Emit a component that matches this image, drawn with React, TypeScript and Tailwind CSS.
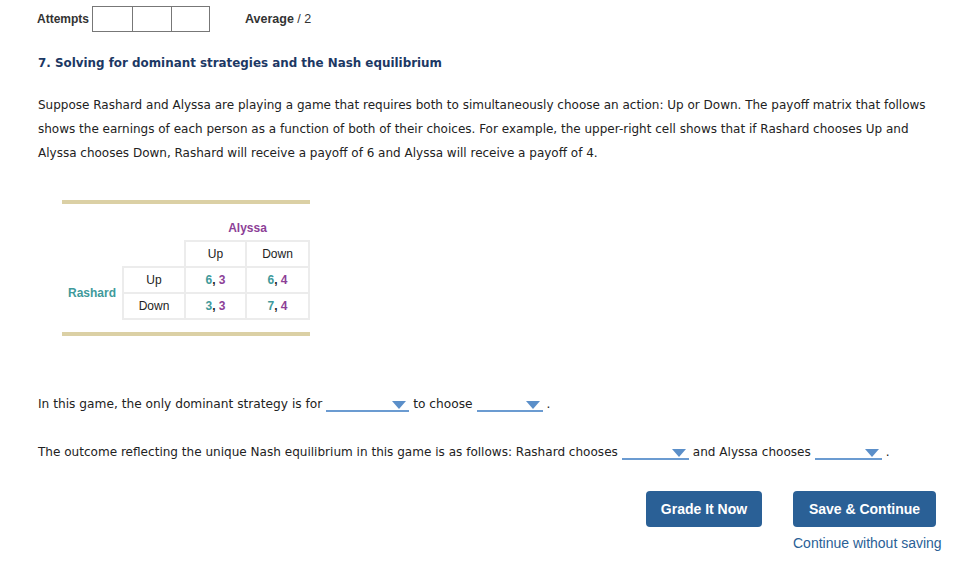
import React from "react";

const verdana = { fontFamily: '"DejaVu Sans", Verdana, sans-serif' };

function Dropdown({ width }: { width: string }) {
  return (
    <span className={`relative inline-block ${width} h-[15px] border-b-[2px] border-[#6b9bd1] align-[-4px] mx-1`}>
      <svg className="absolute right-[3px] top-[4px]" width="14" height="8" viewBox="0 0 14 8">
        <polygon points="0,0 14,0 7,8" fill="#5b8fc9" />
      </svg>
    </span>
  );
}

export default function App() {
  const teal = "text-[#3f9a9b]";
  const purple = "text-[#8d3f97]";
  const cell = "border-2 border-[#ececec] h-[26px] text-center";
  return (
    <div className="w-[967px] h-[575px] bg-white relative text-[#222]" style={{ fontFamily: '"Liberation Sans", Arial, sans-serif' }}>
      {/* header strip */}
      <div className="flex items-center pl-[37px] pt-[6px] text-[12px]">
        <span className="font-bold text-[#333]">Attempts</span>
        <div className="flex ml-[3px] border border-[#777]">
          <div className="w-[39px] h-[24px]"></div>
          <div className="w-[39px] h-[24px] border-l border-[#777]"></div>
          <div className="w-[38px] h-[24px] border-l border-[#777]"></div>
        </div>
        <span className="ml-[35px] text-[#333] text-[12.5px]">
          <span className="font-bold">Average</span> / 2
        </span>
      </div>

      <div className="pl-[38px] pr-6" style={verdana}>
        <h2 className="mt-[22px] text-[11.9px] font-bold text-[#1c3864] leading-[18px]">
          7. Solving for dominant strategies and the Nash equilibrium
        </h2>

        <p className="mt-[21px] text-[12px] leading-[24px] text-[#222] w-[905px]">
          Suppose Rashard and Alyssa are playing a game that requires both to simultaneously choose an action: Up or Down. The payoff matrix that follows shows the earnings of each person as a function of both of their choices. For example, the upper-right cell shows that if Rashard chooses Up and Alyssa chooses Down, Rashard will receive a payoff of 6 and Alyssa will receive a payoff of 4.
        </p>

        {/* payoff matrix */}
        <div className="mt-[35px] ml-[24px] w-[248px]" style={{ fontFamily: '"Liberation Sans", Arial, sans-serif' }}>
          <div className="h-[4px] bg-[#dbd0a5]"></div>
          <div className={`mt-[16px] h-[16px] text-[12px] font-bold ${purple} pl-[123px] text-center leading-[16px]`}>Alyssa</div>
          <table className="mt-[4px] border-collapse text-[12px]">
            <tbody>
              <tr>
                <td className="w-[61px]"></td>
                <td className="w-[62px] border-b-2 border-[#ececec]"></td>
                <td className={`${cell} w-[61px]`}>Up</td>
                <td className={`${cell} w-[63px]`}>Down</td>
              </tr>
              <tr>
                <td rowSpan={2} className={`font-bold ${teal} text-left pl-[6px] pr-1`}>Rashard</td>
                <td className={cell}>Up</td>
                <td className={`${cell} font-bold`}>
                  <span className={teal}>6</span>, <span className={purple}>3</span>
                </td>
                <td className={`${cell} font-bold`}>
                  <span className={teal}>6</span>, <span className={purple}>4</span>
                </td>
              </tr>
              <tr>
                <td className={cell}>Down</td>
                <td className={`${cell} font-bold`}>
                  <span className={teal}>3</span>, <span className={purple}>3</span>
                </td>
                <td className={`${cell} font-bold`}>
                  <span className={teal}>7</span>, <span className={purple}>4</span>
                </td>
              </tr>
            </tbody>
          </table>
          <div className="mt-[12px] h-[4px] bg-[#dbd0a5]"></div>
        </div>

        <p className="mt-[58px] text-[12.2px] leading-[20px] flex items-center">
          In this game, the only dominant strategy is for
          <Dropdown width="w-[83px]" /> to choose
          <Dropdown width="w-[66px]" /> .
        </p>

        <p className="mt-[28px] text-[12.05px] leading-[20px] flex items-center">
          The outcome reflecting the unique Nash equilibrium in this game is as follows: Rashard chooses
          <Dropdown width="w-[67px]" /> and Alyssa chooses
          <Dropdown width="w-[67px]" /> .
        </p>
      </div>

      {/* buttons */}
      <div className="flex justify-end pr-[31px] mt-[29px] gap-[31px] text-[14px]">
        <div className="flex flex-col items-end">
          <button className="w-[116px] h-[36px] rounded-[4px] bg-[#2a6096] text-white font-bold">Grade It Now</button>
        </div>
        <div className="flex flex-col items-start">
          <button className="w-[143px] h-[36px] rounded-[4px] bg-[#2a6096] text-white font-bold">Save &amp; Continue</button>
          <a className="mt-[8px] text-[14px] text-[#2a6096] leading-[16px] -mr-[6px]">Continue without saving</a>
        </div>
      </div>
    </div>
  );
}
